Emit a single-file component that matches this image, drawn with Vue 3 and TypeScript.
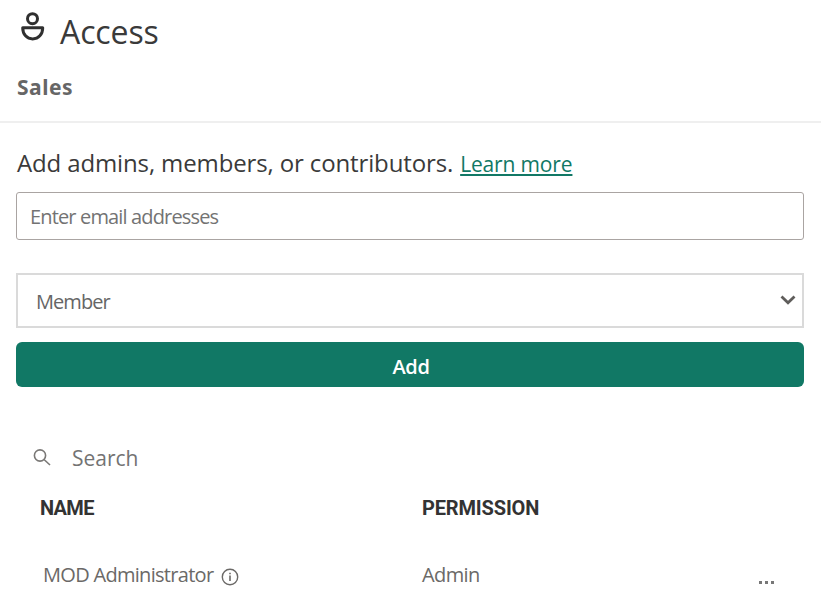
<script setup lang="ts">
import { ref } from 'vue'

interface Entry {
  name: string
  permission: string
}

const email = ref('')
const search = ref('')
const role = ref('Member')
const roles: string[] = ['Admin', 'Member', 'Contributor', 'Viewer']
const entries: Entry[] = [{ name: 'MOD Administrator', permission: 'Admin' }]
</script>

<template>
  <main class="panel">
    <header class="header">
      <div class="title-row">
        <svg class="person" width="24" height="29" viewBox="0 0 24 29" fill="none" stroke="#303030" stroke-width="3">
          <circle cx="11.500" cy="6.700" r="5" />
          <path d="M1.700 15.700h20c0 6.700-4.200 11.200-10 11.200S1.700 22.400 1.700 15.700z" stroke-linejoin="round" />
        </svg>
        <h1 class="title">Access</h1>
      </div>
      <div class="workspace">Sales</div>
    </header>

    <section class="body">
      <p class="intro"><span class="intro-text">Add admins, members, or contributors.</span><a class="link" href="#">Learn more</a></p>
      <input v-model="email" class="email" type="text" placeholder="Enter email addresses" />
      <div class="select-box">
        <select v-model="role" class="select">
          <option v-for="r in roles" :key="r" :value="r">{{ r }}</option>
        </select>
        <svg class="chevron" width="16" height="10" viewBox="0 0 16 10" fill="none" stroke="#5f5d5b" stroke-width="2.8">
          <path d="M1.500 1.500L8 7.700L14.500 1.500" />
        </svg>
      </div>
      <button class="add" type="button">Add</button>

      <label class="search">
        <svg class="search-icon" width="18" height="17" viewBox="0 0 18 17" fill="none" stroke="#7a7876" stroke-width="1.600">
          <circle cx="7" cy="6.500" r="5.600" />
          <path d="M11 10.500L17 16" />
        </svg>
        <input v-model="search" class="search-input" type="text" placeholder="Search" />
      </label>

      <div class="row head">
        <span class="th-name">NAME</span>
        <span class="th-permission">PERMISSION</span>
      </div>
      <div v-for="e in entries" :key="e.name" class="row">
        <span class="name-cell">
          <span class="name">{{ e.name }}</span>
          <svg class="info" width="18" height="18" viewBox="0 0 18 18" fill="none" stroke="#6b6967">
            <circle cx="9" cy="9" r="7.700" stroke-width="1.400" />
            <path d="M9 7.500v5.500M9 4.700v1.600" stroke-width="1.600" />
          </svg>
        </span>
        <span class="permission">{{ e.permission }}</span>
        <button class="more" type="button" aria-label="More options"><i /><i /><i /></button>
      </div>
    </section>
  </main>
</template>

<style>
body {
  background: #fff;
}
</style>

<style scoped>
* {
  box-sizing: border-box;
}
.panel {
  width: 821px;
  height: 603px;
  overflow: hidden;
  background: #fff;
  color: #3a3a3a;
  font-family: 'Open Sans', 'Noto Sans', sans-serif;
}
.header {
  height: 123px;
  padding: 12px 17px 0;
  border-bottom: 2px solid #efefef;
}
.title-row {
  display: flex;
  height: 55px;
  padding-left: 4px;
  gap: 15px;
}
.title {
  margin: 0;
  font-size: 32px;
  font-weight: 400;
  line-height: 39px;
  letter-spacing: -0.1px;
}
.workspace {
  color: #666;
  font-family: 'Noto Sans', sans-serif;
  font-size: 21px;
  font-weight: 700;
  line-height: 41px;
  letter-spacing: 0.5px;
}
.body {
  padding: 22px 17px 0 16px;
}
.intro {
  display: flex;
  align-items: baseline;
  gap: 7px;
  height: 47px;
  margin: 0;
  padding-left: 1px;
  line-height: 36px;
  white-space: nowrap;
}
.intro-text {
  font-size: 24px;
  letter-spacing: -0.13px;
}
.link {
  color: #117865;
  font-size: 21px;
  letter-spacing: -0.15px;
  text-decoration: underline;
  text-decoration-thickness: 2px;
  text-underline-offset: 2px;
}
.email {
  display: block;
  width: 100%;
  height: 48px;
  padding: 1px 13px 0;
  border: 1.5px solid #aaa4a2;
  border-radius: 3px;
  outline: none;
  color: #666;
  font: 20px 'Open Sans', sans-serif;
  letter-spacing: -0.85px;
}
.email::placeholder,
.search-input::placeholder {
  color: #737373;
  opacity: 1;
}
.select-box {
  display: grid;
  height: 55px;
  margin-top: 33px;
  border: 2px solid #dadada;
  align-items: center;
}
.select,
.chevron {
  grid-area: 1 / 1;
}
.select {
  width: 100%;
  height: 51px;
  padding: 2px 18px 0;
  appearance: none;
  border: 0;
  outline: none;
  background: transparent;
  color: #666;
  font: 20px 'Open Sans', sans-serif;
  letter-spacing: -0.95px;
}
.chevron {
  justify-self: end;
  margin-right: 6px;
  margin-bottom: 2px;
  pointer-events: none;
}
.add {
  display: block;
  width: 100%;
  height: 45px;
  margin-top: 14px;
  padding: 4px 0 0 2px;
  border: 0;
  border-radius: 6px;
  background: #117865;
  color: #fff;
  font: 600 20px 'Open Sans', sans-serif;
  letter-spacing: -0.4px;
}
.search {
  display: flex;
  align-items: center;
  gap: 21px;
  height: 40px;
  margin-top: 51px;
  padding-left: 17px;
}
.search-icon {
  margin-bottom: 2px;
}
.search-input {
  width: 300px;
  height: 34px;
  padding: 0;
  border: 0;
  outline: none;
  color: #666;
  font: 21px 'Open Sans', sans-serif;
}
.row {
  display: grid;
  grid-template-columns: 379px 337px 20px;
  align-items: center;
  height: 54px;
  margin-top: 19px;
  padding-left: 27px;
  color: #6b6967;
  font-size: 20px;
}
.head {
  height: 40px;
  margin-top: 10px;
  padding-left: 24px;
  grid-template-columns: 382px 337px;
  color: #333;
  font-family: Roboto, sans-serif;
  font-size: 20px;
  font-weight: 700;
}
.th-name {
  letter-spacing: -0.7px;
}
.th-permission {
  letter-spacing: -0.15px;
}
.name-cell {
  display: flex;
  align-items: center;
  gap: 8px;
}
.name,
.permission {
  letter-spacing: -0.7px;
}
.permission {
  letter-spacing: -0.6px;
}
.info {
  margin-top: 5px;
}
.more {
  display: flex;
  gap: 3px;
  padding: 16px 0 0;
  border: 0;
  background: transparent;
}
.more i {
  width: 3px;
  height: 3px;
  background: #777;
}
</style>
